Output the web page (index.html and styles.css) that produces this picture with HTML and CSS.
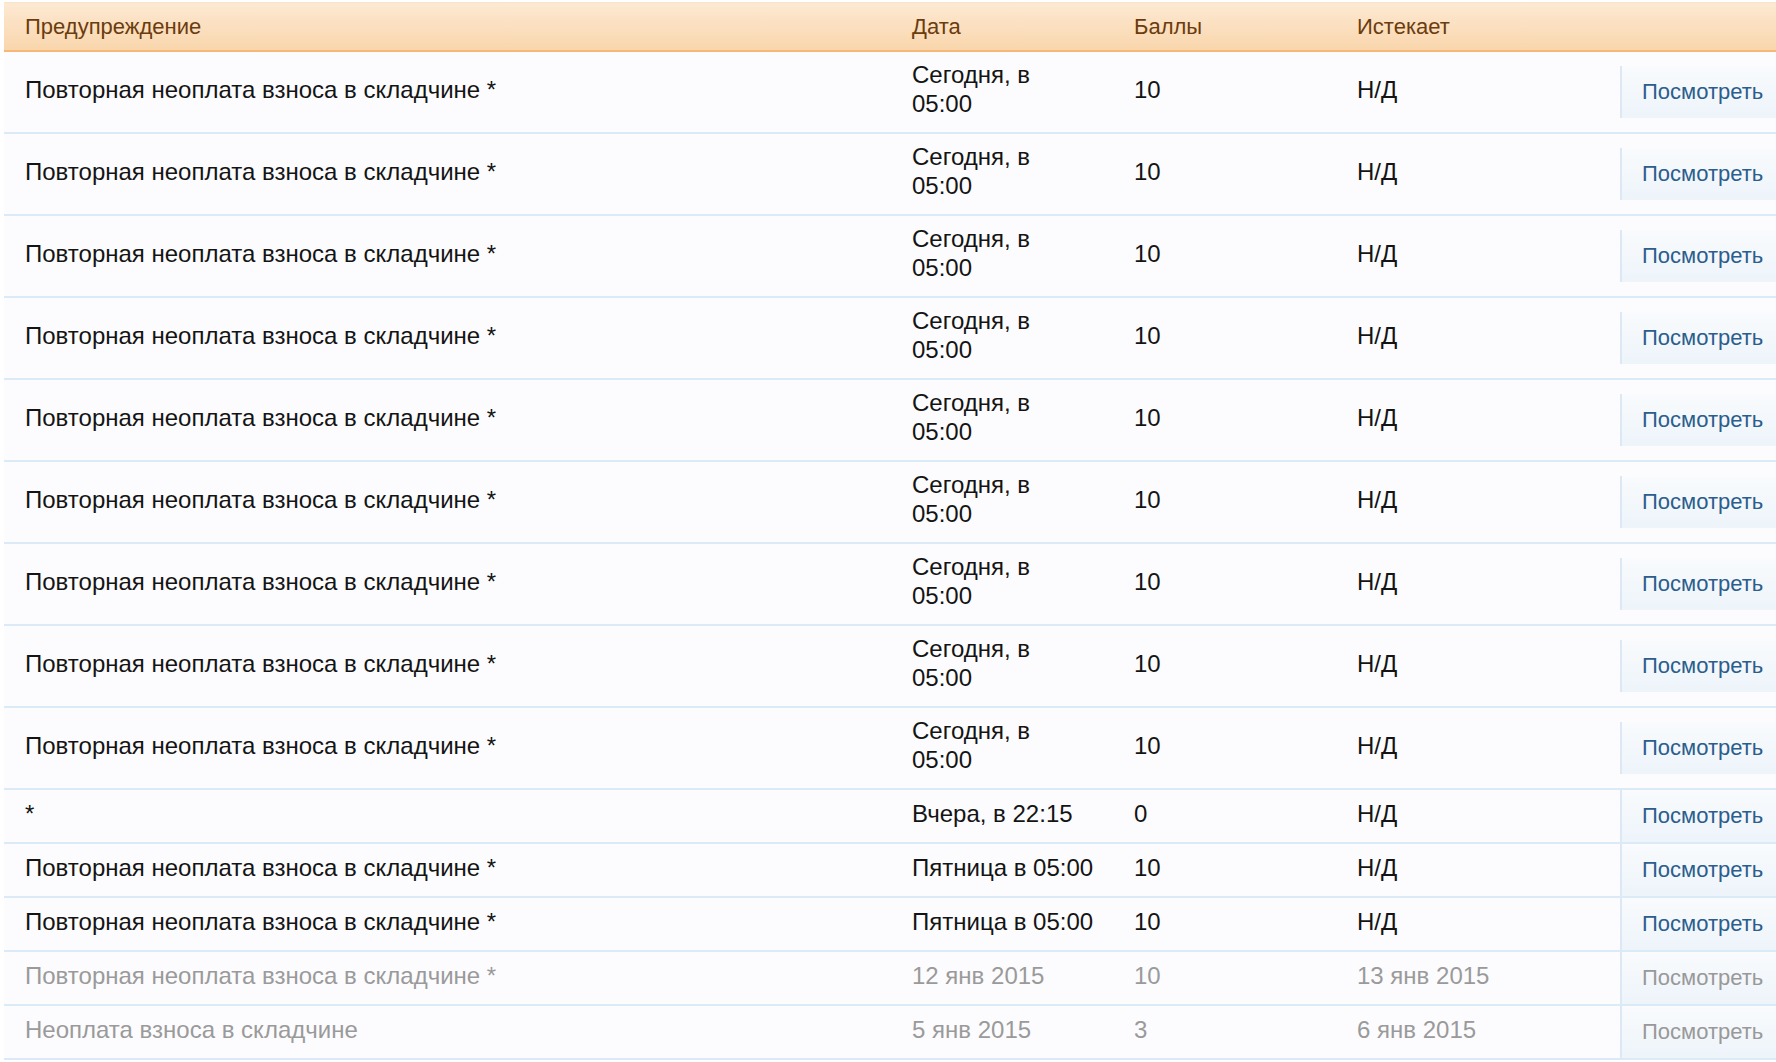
FILE: index.html
```html
<!DOCTYPE html>
<html lang="ru">
<head>
    <meta charset="UTF-8">
    <title>Предупреждения</title>
    <link rel="stylesheet" href="styles.css">
</head>
<body>

<table class="warnings">
    <colgroup>
        <col class="col-title">
        <col class="col-date">
        <col class="col-points">
        <col class="col-expiry">
        <col class="col-action">
    </colgroup>
    <thead>
        <tr>
            <th>Предупреждение</th>
            <th>Дата</th>
            <th>Баллы</th>
            <th>Истекает</th>
            <th></th>
        </tr>
    </thead>
    <tbody>
        <tr>
            <td>Повторная неоплата взноса в складчине *</td>
            <td>Сегодня, в 05:00</td>
            <td>10</td>
            <td>Н/Д</td>
            <td class="action"><a href="#" class="view">Посмотреть</a></td>
        </tr>
        <tr>
            <td>Повторная неоплата взноса в складчине *</td>
            <td>Сегодня, в 05:00</td>
            <td>10</td>
            <td>Н/Д</td>
            <td class="action"><a href="#" class="view">Посмотреть</a></td>
        </tr>
        <tr>
            <td>Повторная неоплата взноса в складчине *</td>
            <td>Сегодня, в 05:00</td>
            <td>10</td>
            <td>Н/Д</td>
            <td class="action"><a href="#" class="view">Посмотреть</a></td>
        </tr>
        <tr>
            <td>Повторная неоплата взноса в складчине *</td>
            <td>Сегодня, в 05:00</td>
            <td>10</td>
            <td>Н/Д</td>
            <td class="action"><a href="#" class="view">Посмотреть</a></td>
        </tr>
        <tr>
            <td>Повторная неоплата взноса в складчине *</td>
            <td>Сегодня, в 05:00</td>
            <td>10</td>
            <td>Н/Д</td>
            <td class="action"><a href="#" class="view">Посмотреть</a></td>
        </tr>
        <tr>
            <td>Повторная неоплата взноса в складчине *</td>
            <td>Сегодня, в 05:00</td>
            <td>10</td>
            <td>Н/Д</td>
            <td class="action"><a href="#" class="view">Посмотреть</a></td>
        </tr>
        <tr>
            <td>Повторная неоплата взноса в складчине *</td>
            <td>Сегодня, в 05:00</td>
            <td>10</td>
            <td>Н/Д</td>
            <td class="action"><a href="#" class="view">Посмотреть</a></td>
        </tr>
        <tr>
            <td>Повторная неоплата взноса в складчине *</td>
            <td>Сегодня, в 05:00</td>
            <td>10</td>
            <td>Н/Д</td>
            <td class="action"><a href="#" class="view">Посмотреть</a></td>
        </tr>
        <tr>
            <td>Повторная неоплата взноса в складчине *</td>
            <td>Сегодня, в 05:00</td>
            <td>10</td>
            <td>Н/Д</td>
            <td class="action"><a href="#" class="view">Посмотреть</a></td>
        </tr>
        <tr>
            <td>*</td>
            <td>Вчера, в 22:15</td>
            <td>0</td>
            <td>Н/Д</td>
            <td class="action"><a href="#" class="view">Посмотреть</a></td>
        </tr>
        <tr>
            <td>Повторная неоплата взноса в складчине *</td>
            <td>Пятница в 05:00</td>
            <td>10</td>
            <td>Н/Д</td>
            <td class="action"><a href="#" class="view">Посмотреть</a></td>
        </tr>
        <tr>
            <td>Повторная неоплата взноса в складчине *</td>
            <td>Пятница в 05:00</td>
            <td>10</td>
            <td>Н/Д</td>
            <td class="action"><a href="#" class="view">Посмотреть</a></td>
        </tr>
        <tr class="expired">
            <td>Повторная неоплата взноса в складчине *</td>
            <td>12 янв 2015</td>
            <td>10</td>
            <td>13 янв 2015</td>
            <td class="action"><a href="#" class="view">Посмотреть</a></td>
        </tr>
        <tr class="expired">
            <td>Неоплата взноса в складчине</td>
            <td>5 янв 2015</td>
            <td>3</td>
            <td>6 янв 2015</td>
            <td class="action"><a href="#" class="view">Посмотреть</a></td>
        </tr>
    </tbody>
</table>

</body>
</html>
```

FILE: styles.css
```css
body {
    margin: 0;
    background-color: #fff;
    font-family: 'Liberation Sans', Arial, Helvetica, sans-serif;
    color: #141414;
}
.warnings {
    width: 1772px;
    margin: 2px 0 0 4px;
    border-collapse: separate;
    border-spacing: 0;
    table-layout: fixed;
}
.col-title { width: 887px; }
.col-date { width: 222px; }
.col-points { width: 223px; }
.col-expiry { width: 284px; }
.col-action { width: 156px; }

.warnings th {
    text-align: left;
    font-weight: normal;
    font-size: 22px;
    line-height: 47px;
    padding: 0 18px 0 21px;
    color: #6b3c0e;
    background: linear-gradient(#fde9d3, #f9d6ac);
    border-top: 1px solid #f8e4cc;
    border-bottom: 2px solid #f5b878;
}
.warnings td {
    font-size: 24px;
    line-height: 29px;
    padding: 8px 18px 14px 21px;
    vertical-align: middle;
    background-color: #fcfcfe;
    border-bottom: 2px solid #dbeaf7;
}
.warnings td.action {
    padding: 0;
}
.view {
    display: block;
    height: 52px;
    line-height: 52px;
    padding-left: 20px;
    font-size: 22px;
    color: #2b5d8d;
    text-decoration: none;
    white-space: nowrap;
    background: linear-gradient(#f9fbfd, #edf4fa);
    border-left: 2px solid #dce9f4;
}
.expired td {
    color: #9a9a9a;
}
.expired .view {
    color: #999;
}
```
